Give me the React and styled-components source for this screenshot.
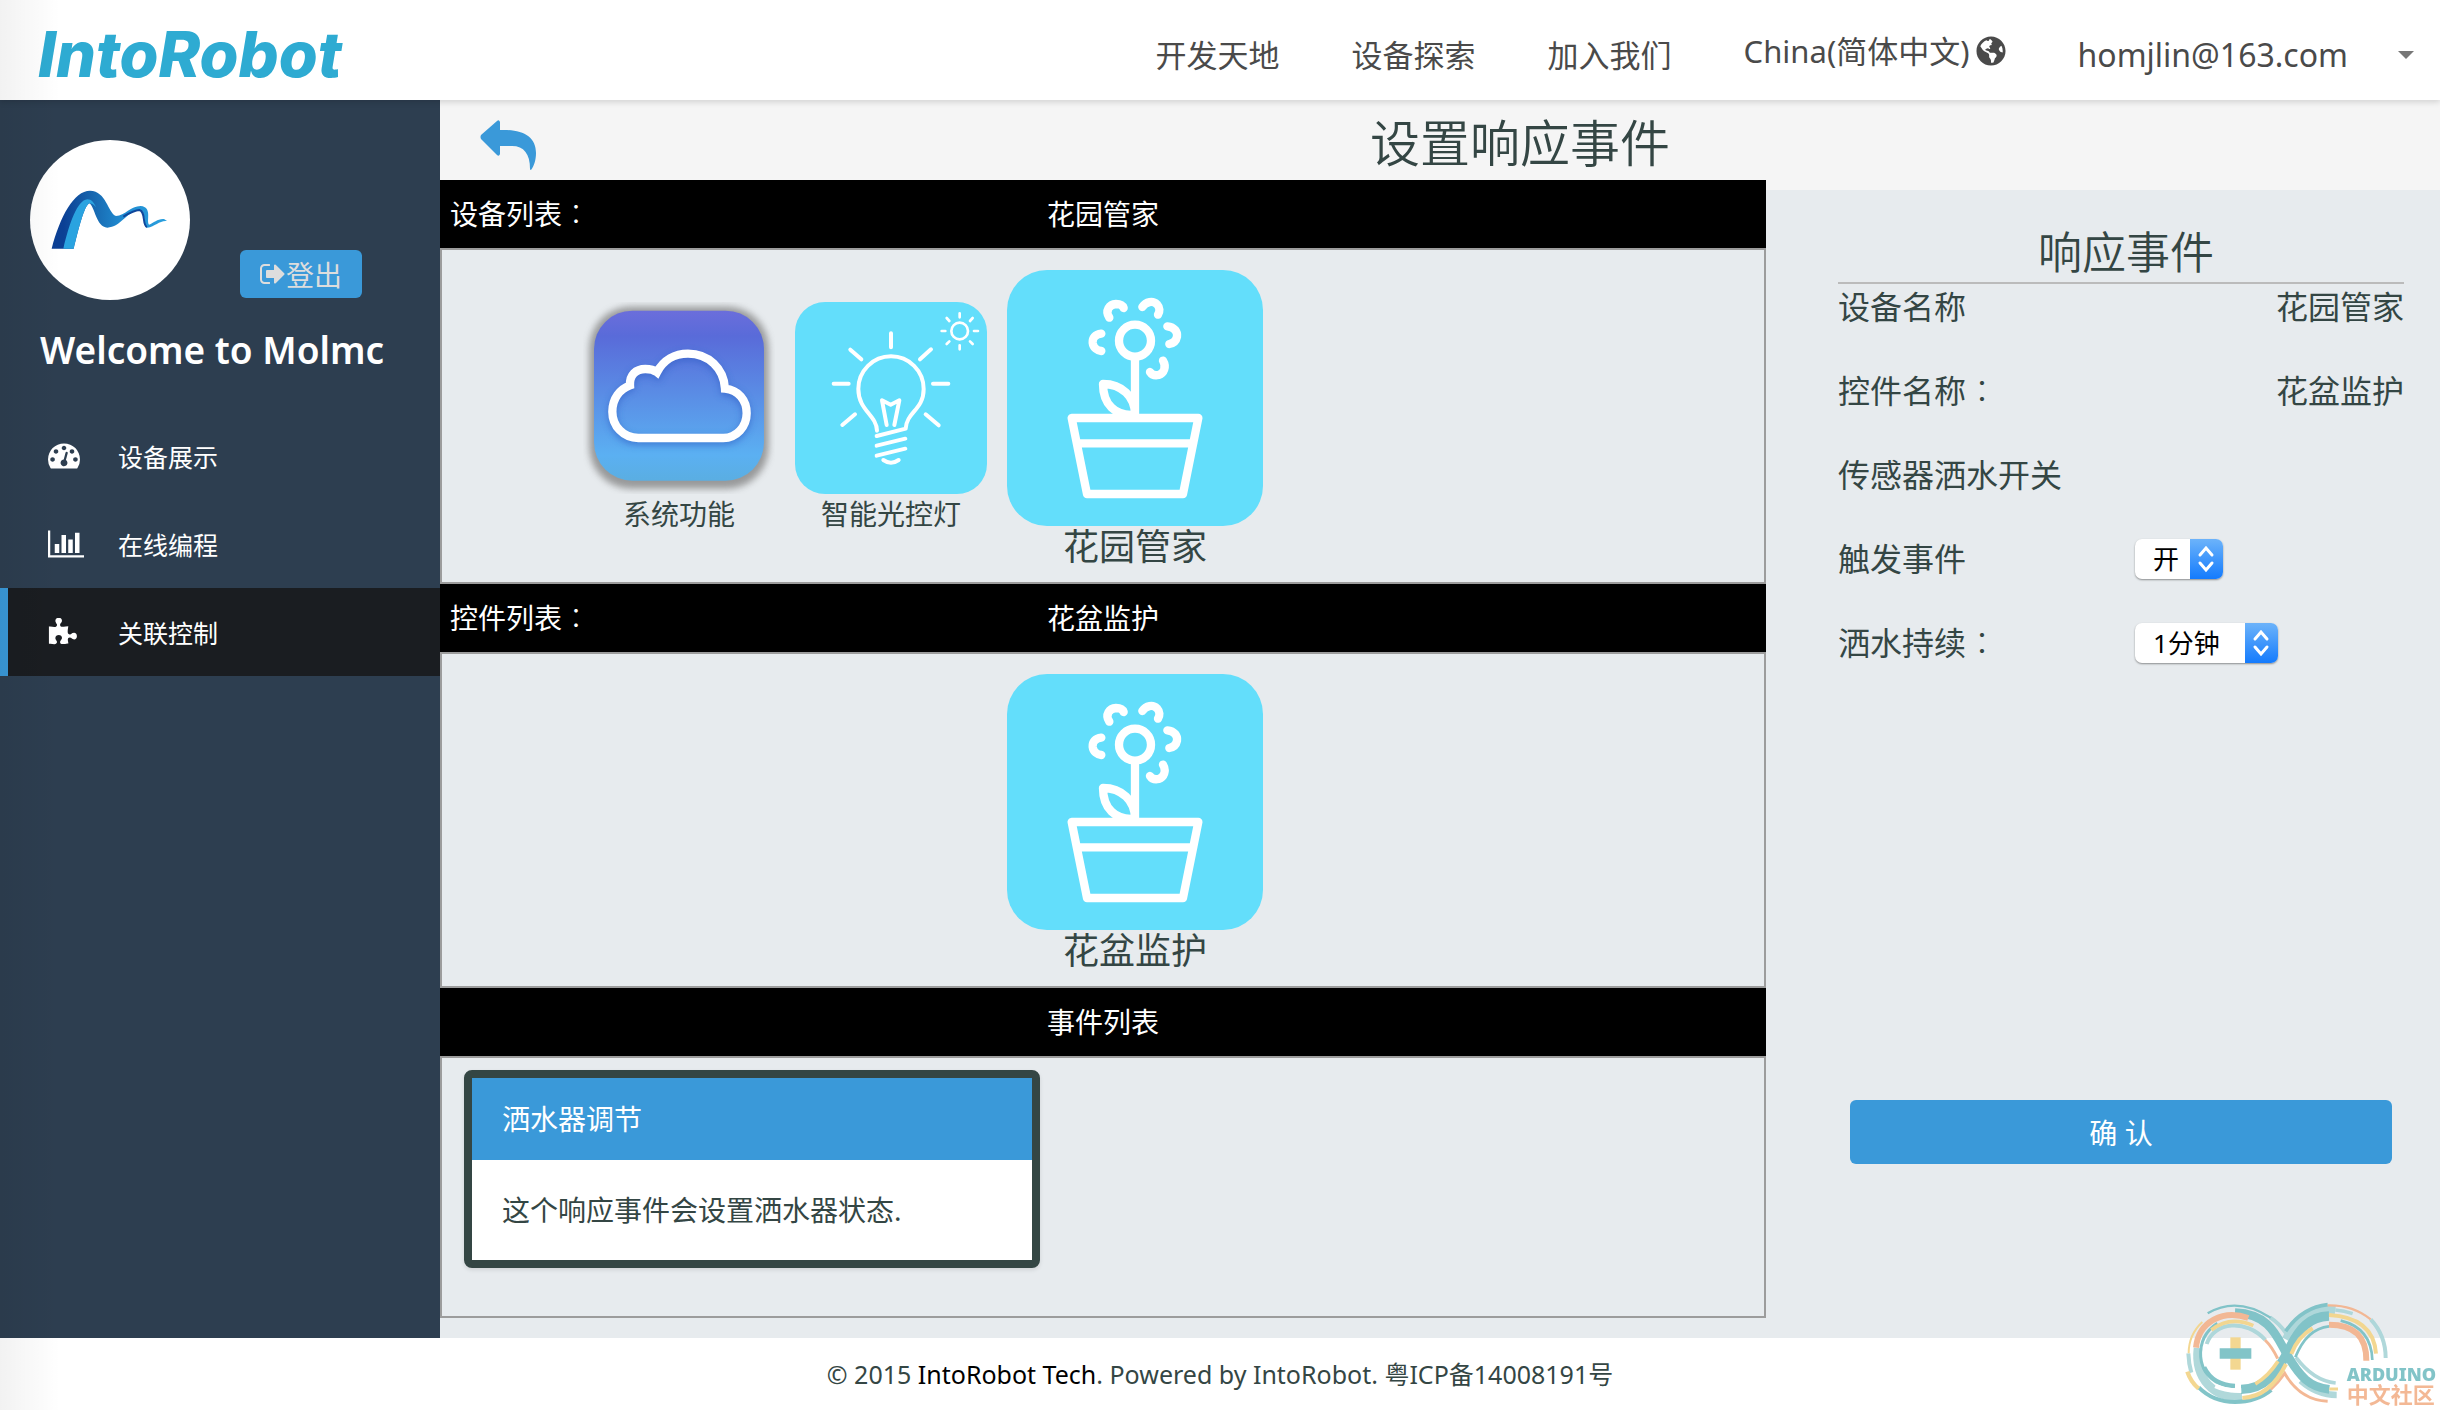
import React from "react";
import styled, { createGlobalStyle } from "styled-components";
import { FaGlobeAmericas } from "react-icons/fa";

const GlobalStyle = createGlobalStyle`
  * {
    box-sizing: border-box;
  }
  body {
    margin: 0;
    color: #344644;
    background-color: white;
    font-family: "Noto Sans", "Noto Sans CJK SC", sans-serif;
    font-size: 28px;
  }
  h1, h2, p, ul {
    margin: 0;
    padding: 0;
    font-weight: 400;
  }
  a {
    color: inherit;
    text-decoration: none;
  }
  button, select {
    font-family: inherit;
  }
`;

const Page = styled.div`
  position: relative;
  display: flex;
  flex-direction: column;
  min-height: 100vh;
`;

const EdgeShade = styled.div`
  position: absolute;
  top: 0;
  bottom: 0;
  left: 0;
  width: 60px;
  background: linear-gradient(to right, rgba(0, 0, 0, 0.05), transparent);
  pointer-events: none;
`;

const Header = styled.header`
  position: relative;
  display: flex;
  align-items: center;
  justify-content: space-between;
  height: 100px;
  padding: 0 26px 0 36px;
  background-color: white;
  box-shadow: 0 2px 6px rgba(0, 0, 0, 0.15);
`;

const Brand = styled.a`
  font-family: Inter, sans-serif;
  font-size: 63px;
  font-style: italic;
  font-weight: 800;
  line-height: 100px;
  color: #2eabd2;
  padding: 8px 0 0 2px;
`;

const Nav = styled.nav`
  display: flex;
  align-items: center;
  gap: 72px;
  padding-top: 10px;
  font-size: 31px;
  line-height: 44px;
  color: #4a4a4a;
`;

const Language = styled.a`
  display: flex;
  align-items: center;
  gap: 6px;
  padding-bottom: 8px;

  svg {
    width: 30px;
    height: 30px;
  }
`;

const Account = styled.button`
  display: flex;
  align-items: center;
  gap: 50px;
  padding: 0;
  border: none;
  background: none;
  color: inherit;
  font-size: 32px;
  line-height: 44px;

  &::after {
    content: "";
    border: 8px solid transparent;
    border-top-color: #777;
    border-bottom: none;
  }
`;

const Body = styled.div`
  display: flex;
  flex: 1;
`;

const Sidebar = styled.aside`
  flex: 0 0 440px;
  background-color: #2d3e50;
  color: white;
`;

const Profile = styled.div`
  display: flex;
  align-items: flex-end;
  gap: 50px;
  padding: 40px 30px 0;
`;

const Avatar = styled.svg`
  width: 160px;
  height: 160px;
  border-radius: 50%;
  background-color: white;
`;

const Logout = styled.button`
  display: flex;
  align-items: center;
  justify-content: center;
  width: 122px;
  height: 48px;
  margin-bottom: 2px;
  padding: 0;
  border: none;
  border-radius: 6px;
  background-color: #3a99d9;
  color: #ddd;
  font-size: 28px;

  svg {
    width: 26px;
    height: 28px;
  }
`;

const Welcome = styled.p`
  padding: 24px 40px 0;
  font-size: 37px;
  font-weight: 600;
  line-height: 52px;
`;

const Menu = styled.ul`
  padding-top: 36px;
  list-style: none;
`;

const MenuLink = styled.a`
  display: flex;
  align-items: center;
  height: 88px;
  padding-left: 40px;
  border-left: 8px solid ${props => (props.$active ? "#3a99d9" : "transparent")};
  background-color: ${props => (props.$active ? "#1a1d21" : "transparent")};
  font-size: 25px;
`;

const MenuIcon = styled.svg`
  width: ${props => props.$width}px;
  height: 28px;
  margin-right: ${props => 70 - props.$width}px;
`;

const Main = styled.main`
  flex: 1;
  min-width: 0;
  display: flex;
  flex-direction: column;
  background-color: #f5f5f5;
`;

const TitleBar = styled.div`
  display: grid;
  grid-template-columns: 160px 1fr;
  align-items: center;
  height: 80px;
`;

const Back = styled.button`
  justify-self: start;
  margin-left: 40px;
  padding: 10px 0 0;
  border: none;
  background: none;

  svg {
    display: block;
    width: 56px;
    height: 50px;
  }
`;

const Title = styled.h1`
  font-family: "Noto Sans CJK SC", sans-serif;
  font-size: 50px;
  font-weight: 350;
  line-height: 80px;
  text-align: center;
`;

const Columns = styled.div`
  flex: 1;
  display: grid;
  grid-template-columns: 66.3% 1fr;
`;

const Lists = styled.div`
  padding-bottom: 20px;
  background-color: #e7ebee;
`;

const ListBar = styled.div`
  display: grid;
  grid-template-columns: 1fr auto 1fr;
  height: 68px;
  padding: 0 10px;
  background-color: black;
  color: white;
  font-size: 28px;
  line-height: 68px;
`;

// full-width colon centred in its cell
const Colon = styled.span`
  font-family: "Noto Sans CJK TC", sans-serif;
  font-weight: 300;
  line-height: 1;
`;

const Tiles = styled.div`
  display: grid;
  grid-template-columns: 1fr 256px 1fr;
  padding: 20px 0 14px 64px;
  border: 2px solid #9c9c9c;
`;

const SideTiles = styled.div`
  display: flex;
  align-items: flex-start;
  justify-content: flex-end;
  gap: 20px;
  padding: 32px 20px 0 0;
`;

const TileButton = styled.button`
  display: block;
  width: ${props => (props.$big ? 256 : 192)}px;
  padding: 0;
  border: none;
  background: none;
  color: inherit;
  font-size: ${props => (props.$big ? 36 : 28)}px;
  line-height: ${props => (props.$big ? 42 : 40)}px;
  text-align: center;

  svg {
    display: block;
    width: 100%;
  }
`;

const Events = styled.div`
  padding: 12px 22px 48px;
  border: 2px solid #9c9c9c;
`;

const EventCard = styled.article`
  max-width: 576px;
  border: 8px solid #344644;
  border-radius: 8px;
  background-color: white;
  box-shadow: 0 2px 4px rgba(0, 0, 0, 0.1);
`;

const EventName = styled.h2`
  padding: 0 30px;
  background-color: #3a99d9;
  color: white;
  font-size: 28px;
  line-height: 82px;
`;

const EventText = styled.p`
  padding: 0 30px;
  line-height: 100px;
`;

const Panel = styled.form`
  display: flex;
  flex-direction: column;
  margin-top: 10px;
  padding: 28px 36px 0 72px;
  background-color: #e7ebee;
`;

const PanelTitle = styled.h2`
  padding-left: 10px;
  border-bottom: 2px solid #bbb;
  font-family: "Noto Sans CJK SC", sans-serif;
  font-size: 44px;
  font-weight: 350;
  line-height: 64px;
  text-align: center;
`;

const Field = styled.div`
  display: grid;
  grid-template-columns: 297px 1fr;
  align-items: center;
  height: 46px;
  margin-bottom: 38px;
  font-size: 32px;
  line-height: 46px;
`;

const FieldValue = styled.span`
  text-align: right;
`;

const SelectBox = styled.div`
  position: relative;
  justify-self: start;
  height: 40px;

  svg {
    position: absolute;
    top: 0;
    right: 0;
    width: 33px;
    height: 40px;
    border-radius: 0 7px 7px 0;
    background: linear-gradient(#6cb3fa, #147bfd);
    pointer-events: none;
  }
`;

const Select = styled.select`
  appearance: none;
  display: block;
  height: 40px;
  padding: 0 43px 0 18px;
  border: none;
  border-radius: 7px;
  background-color: white;
  box-shadow: 0 1px 2px rgba(0, 0, 0, 0.4);
  color: black;
  font-size: 26px;
`;

const Confirm = styled.button`
  height: 64px;
  margin: auto 12px 174px;
  border: none;
  border-radius: 6px;
  background-color: #3a99d9;
  color: white;
  font-size: 28px;
`;

const Footer = styled.footer`
  font-size: 25px;
  line-height: 72px;
  text-align: center;

  a {
    color: black;
  }
`;

const Watermark = styled.div`
  position: absolute;
  right: 0;
  bottom: 0;
  width: 300px;
  height: 130px;
  opacity: 0.95;
  pointer-events: none;

  svg {
    display: block;
    width: 300px;
    height: 130px;
  }
`;

const WatermarkText = styled.div`
  position: absolute;
  right: 4px;
  bottom: 5px;
  color: #f3b590;
  font-size: 22px;
  font-weight: 700;
  line-height: 22px;

  strong {
    display: block;
    color: #7cc1c6;
    font-size: 18px;
    line-height: 18px;
  }
`;

const menu = [
  {
    name: "设备展示",
    width: 32,
    viewBox: "0 256 1792 1408",
    path:
      "M384 1152q0-53-37.5-90.5t-90.5-37.5-90.5 37.5-37.5 90.5 37.5 90.5 90.5 37.5 90.5-37.5 37.5-90.5zm192-448q0-53-37.5-90.5t-90.5-37.5-90.5 37.5-37.5 90.5 37.5 90.5 90.5 37.5 90.5-37.5 37.5-90.5zm428 481l101-382q6-26-7.5-48.5t-38.5-29.5-48 6.5-30 39.5l-101 382q-60 5-107 43.5t-63 98.5q-20 77 20 146t117 89 146-20 89-117q16-60-6-117t-72-91zm660-33q0-53-37.5-90.5t-90.5-37.5-90.5 37.5-37.5 90.5 37.5 90.5 90.5 37.5 90.5-37.5 37.5-90.5zm-640-640q0-53-37.5-90.5t-90.5-37.5-90.5 37.5-37.5 90.5 37.5 90.5 90.5 37.5 90.5-37.5 37.5-90.5zm448 192q0-53-37.5-90.5t-90.5-37.5-90.5 37.5-37.5 90.5 37.5 90.5 90.5 37.5 90.5-37.5 37.5-90.5zm320 448q0 261-141 483-19 29-54 29h-1402q-35 0-54-29-141-221-141-483 0-182 71-348t191-286 286-191 348-71 348 71 286 191 191 286 71 348z"
  },
  {
    name: "在线编程",
    width: 36,
    viewBox: "0 128 2048 1536",
    path:
      "M640 896v512h-256v-512h256zm384-512v1024h-256v-1024h256zm1024 1152v128h-2048v-1536h128v1408h1920zm-640-896v768h-256v-768h256zm384-384v1152h-256v-1152h256z"
  },
  {
    name: "关联控制",
    active: true,
    width: 30,
    viewBox: "64 0 1728 1664",
    path:
      "M1755 1083q0 81-44.5 135t-123.5 54q-41 0-77.5-17.5t-59-38-56.5-38-71-17.5q-110 0-110 124 0 39 16 115t15 115v5q-22 0-33 1-34 3-97.5 11.5t-115.5 13.5-98 5q-61 0-103-26.5t-42-83.5q0-37 17.5-71t38-56.5 38-59 17.5-77.5q0-79-54-123.5t-135-44.5q-84 0-143 45.5t-59 127.5q0 43 15 83t33.5 64.5 33.5 53 15 50.5q0 45-46 89-37 35-117 35-95 0-245-24-9-2-27.5-4t-27.5-4l-13-2q-1 0-3-1-2 0-2-1v-1024q2 1 17.5 3.5t34 5 21.5 3.5q150 24 245 24 80 0 117-35 46-44 46-89 0-22-15-50.5t-33.5-53-33.5-64.5-15-83q0-82 59-127.5t144-45.5q80 0 134 44.5t54 123.5q0 41-17.5 77.5t-38 59-38 56.5-17.5 71q0 57 42 83.5t103 26.5q64 0 180-15t163-17v2q-1 2-3.5 17.5t-5 34-3.5 21.5q-24 150-24 245 0 80 35 117 44 46 89 46 22 0 50.5-15t53-33.5 64.5-33.5 83-15q82 0 127.5 59t45.5 143z"
  }
];

const MolmcLogo = () => (
  <Avatar viewBox="60 60 480 480">
    <defs>
      <linearGradient id="ribbon" x1="0" x2="1">
        <stop offset="0.1" stopColor="#0b3f94" />
        <stop offset="0.35" stopColor="#1766ae" />
        <stop offset="0.6" stopColor="#1f8ad0" />
        <stop offset="1" stopColor="#2aa0de" />
      </linearGradient>
    </defs>
    <path
      fill="url(#ribbon)"
      d="M125 386C150 290 192 212 240 212C290 214 292 276 318 288C345 287 362 258 392 258C428 261 408 303 417 314C432 308 444 295 462 297L471 303C450 300 436 319 412 323C394 320 414 271 386 271C350 275 332 322 292 323C258 322 255 260 238 250C222 258 205 330 191 386Z"
    />
    <path
      fill="#2aa3e0"
      d="M160 386C178 310 202 240 232 238C245 238 252 248 258 262C250 252 244 250 238 250C222 258 205 330 191 386Z"
    />
    <path
      fill="none"
      stroke="#0f469b"
      strokeWidth="6"
      d="M340 290C360 278 374 270 388 270C408 274 396 316 411 321"
    />
  </Avatar>
);

const CloudIcon = () => (
  <svg viewBox="69 126 576 576">
    <defs>
      <linearGradient id="sky" x2="0" y2="1">
        <stop offset="0" stopColor="#6b6edb" />
        <stop offset="0.15" stopColor="#596bd9" />
        <stop offset="0.85" stopColor="#5bb0f2" />
        <stop offset="1" stopColor="#5aaee2" />
      </linearGradient>
      <filter id="soft" x="-20%" y="-20%" width="140%" height="140%">
        <feGaussianBlur stdDeviation="11" />
      </filter>
    </defs>
    <rect x="88" y="140" width="538" height="546" rx="125" fill="#777" opacity="0.7" filter="url(#soft)" />
    <rect x="102" y="152" width="510" height="510" rx="115" fill="url(#sky)" />
    <g fill="none" strokeLinejoin="miter">
      <path
        stroke="#2f5fc4"
        strokeWidth="26"
        opacity="0.6"
        filter="url(#soft)"
        d="M235 542C190 542 157 506 157 463C157 423 180 393 210 381C208 353 228 335 256 335C272 335 284 338 292 345C310 308 345 289 384 289C445 289 492 333 495 394C535 398 560 428 560 468C560 508 530 542 490 542Z"
      />
      <path
        stroke="white"
        strokeWidth="25"
        d="M235 534C190 534 157 498 157 455C157 415 180 387 210 376C208 345 228 327 256 327C270 327 282 330 291 337C310 300 345 281 384 281C445 281 492 325 495 386C535 390 560 420 560 460C560 500 530 534 490 534Z"
      />
    </g>
  </svg>
);

const BulbIcon = () => (
  <svg viewBox="705 126 576 576">
    <rect x="705" y="126" width="576" height="576" rx="90" fill="#63defb" />
    <g fill="none" stroke="white" strokeWidth="12" strokeLinecap="round" strokeLinejoin="round">
      <path d="M951 512C950 465 895 452 895 387A98 98 0 0 1 1091 387C1091 450 1040 455 1037 506L950 528" />
      <path d="M980 495L966 421L992 434L1018 421L1003 495" />
      <path d="M950 557L1036 536M950 587L1036 566M970 600Q993 616 1016 600" />
      <path d="M993 220V262M871 269L904 298M1113 268L1080 298M821 371H866M1119 371H1165M847 495L885 463M1097 463L1136 496" />
      <g strokeWidth="8">
        <circle cx="1199" cy="213" r="25" />
        <path d="M1199 160V172M1199 256V268M1145 213H1156M1242 213H1254M1160 174L1168 183M1238 174L1230 183M1160 252L1168 244M1238 252L1230 244" />
      </g>
    </g>
  </svg>
);

const PotIcon = () => (
  <svg viewBox="81 60 768 768">
    <rect x="81" y="60" width="768" height="768" rx="120" fill="#63defb" />
    <g fill="none" stroke="white" strokeWidth="25" strokeLinecap="round" strokeLinejoin="round">
      <circle cx="465" cy="272" r="48" />
      <path d="M465 332V500M369 402C425 402 465 440 465 494C405 500 369 462 369 402Z" />
      <path d="M275 504H655L609 732H321ZM292 580H640" />
      <path d="M388 203C374 182 388 163 408 162C420 162 428 166 431 174" />
      <path d="M487 171C498 154 519 151 531 163C540 173 540 185 534 194" />
      <path d="M562 229C584 231 593 246 591 260C588 275 580 280 568 282" />
      <path d="M549 332C560 350 552 370 536 375C525 377 515 374 510 366" />
      <path d="M364 251C345 253 337 265 338 278C340 294 352 302 364 303" />
    </g>
  </svg>
);

const InfinityMark = () => (
  <svg viewBox="0 0 900 390" fill="none">
    <g stroke="#acd6d9">
      <path strokeWidth="12" d="M390 112Q418 130 440 162" />
      <path strokeWidth="12" d="M145 220Q146 250 154 278" />
      <path strokeWidth="26" d="M174 204Q166 272 204 314Q240 354 306 352" />
      <path strokeWidth="12" d="M200 192C222 125 318 115 376 180" />
      <path strokeWidth="24" d="M437 178C480 100 530 82 586 90" />
      <path strokeWidth="10" d="M586 90Q612 92 638 101" />
      <path strokeWidth="12" d="M692 118Q737 166 737 234" />
      <path strokeWidth="11" d="M468 232Q520 302 587 309" />
      <path strokeWidth="19" d="M482 302Q530 345 590 345" />
    </g>
    <g stroke="#7cc1c6">
      <path strokeWidth="7" d="M203 100Q290 48 392 113" />
      <path strokeWidth="9" d="M232 130Q178 166 182 230Q184 262 204 284" />
      <path strokeWidth="14" d="M192 262Q218 316 285 318" />
      <path strokeWidth="12" d="M176 322Q220 366 285 366Q350 366 394 330" />
      <path strokeWidth="28" d="M303 328C380 328 412 270 440 222C478 140 510 110 567 108" />
      <path strokeWidth="26" d="M285 98C390 102 410 170 440 222C480 292 510 322 568 328" />
      <path strokeWidth="11" d="M437 154Q486 82 563 74" />
      <path strokeWidth="8" d="M466 232Q500 146 567 139" />
      <path strokeWidth="8" d="M602 122Q694 144 697 240" />
    </g>
    <g stroke="#f3b590">
      <path strokeWidth="18" d="M168 203C176 124 250 88 325 114" />
      <path strokeWidth="9" d="M375 180Q396 200 413 236" />
      <path strokeWidth="9" d="M392 328Q416 306 434 280Q480 360 563 364" />
      <path strokeWidth="7" d="M563 76Q638 74 692 118" />
      <path strokeWidth="18" d="M567 134Q680 134 679 242" />
    </g>
    <g stroke="#f3d58c">
      <path strokeWidth="6" d="M146 220Q146 164 187 126" />
      <path strokeWidth="13" d="M142 275Q152 306 176 326" />
      <path strokeWidth="11" d="M214 150Q270 106 340 137" />
      <path strokeWidth="12" d="M307 354Q390 350 438 252" />
      <path strokeWidth="11" d="M346 312Q384 290 414 244" />
      <path strokeWidth="12" d="M454 222Q474 170 518 145" />
      <path strokeWidth="12" d="M567 105Q700 112 708 221" />
      <path strokeWidth="9" d="M568 327H594" />
    </g>
    <path stroke="white" strokeWidth="14" d="M226 318Q260 334 304 331" />
    <path fill="#f3d58c" d="M271 172H302V269H271Z" />
    <path fill="#7cc1c6" d="M239 205H334V236H239Z" />
  </svg>
);

const Tile = ({ icon, name, big }) => (
  <TileButton type="button" $big={big}>
    {icon}
    {name}
  </TileButton>
);

const Dropdown = ({ id, options }) => (
  <SelectBox>
    <Select id={id}>
      {options.map(option => (
        <option key={option}>{option}</option>
      ))}
    </Select>
    <svg viewBox="0 0 33 40" fill="none" stroke="white" strokeWidth="3">
      <path d="M10 16L16 9L22 16M10 24L16 31L22 24" strokeLinecap="round" />
    </svg>
  </SelectBox>
);

const App = () => (
  <Page>
    <GlobalStyle />
    <Header>
      <Brand href="#">IntoRobot</Brand>
      <Nav>
        <a href="#develop">开发天地</a>
        <a href="#explore">设备探索</a>
        <a href="#join">加入我们</a>
        <Language href="#language">
          China(简体中文)
          <FaGlobeAmericas />
        </Language>
        <Account type="button">homjlin@163.com</Account>
      </Nav>
    </Header>
    <Body>
      <Sidebar>
        <Profile>
          <MolmcLogo />
          <Logout type="button">
            <svg viewBox="64 0 1664 1792" fill="currentColor">
              <path d="M704 1440q0 4 1 20t.5 26.5-3 23.5-10 19.5-20.5 6.5h-320q-119 0-203.5-84.5t-84.5-203.5v-704q0-119 84.5-203.5t203.5-84.5h320q13 0 22.5 9.5t9.5 22.5q0 4 1 20t.5 26.5-3 23.5-10 19.5-20.5 6.5h-320q-66 0-113 47t-47 113v704q0 66 47 113t113 47h312l11.5 1 11.5 3 8 5.5 7 9 2 13.5zm928-544q0 26-19 45l-544 544q-19 19-45 19t-45-19-19-45v-288h-448q-26 0-45-19t-19-45v-384q0-26 19-45t45-19h448v-288q0-26 19-45t45-19 45 19l544 544q19 19 19 45z" />
            </svg>
            登出
          </Logout>
        </Profile>
        <Welcome>Welcome to Molmc</Welcome>
        <Menu>
          {menu.map(item => (
            <li key={item.name}>
              <MenuLink href="#" $active={item.active}>
                <MenuIcon viewBox={item.viewBox} $width={item.width} fill="white">
                  <path d={item.path} />
                </MenuIcon>
                {item.name}
              </MenuLink>
            </li>
          ))}
        </Menu>
      </Sidebar>
      <Main>
        <TitleBar>
          <Back type="button" aria-label="返回">
            <svg viewBox="0 0 56 50" fill="#3a99d9">
              <path d="M20 2V10C42 9 56 16 56 33C56 40 54 46 51 50Q50 50 50 49C50 34 44 26 32 26H20V34Q19 37 17 35L1 19Q0 17 1 15L17 1Q19-1 20 2Z" />
            </svg>
          </Back>
          <Title>设置响应事件</Title>
        </TitleBar>
        <Columns>
          <Lists>
            <ListBar>
              <span>
                设备列表<Colon>：</Colon>
              </span>
              <span>花园管家</span>
            </ListBar>
            <Tiles>
              <SideTiles>
                <Tile icon={<CloudIcon />} name="系统功能" />
                <Tile icon={<BulbIcon />} name="智能光控灯" />
              </SideTiles>
              <Tile big icon={<PotIcon />} name="花园管家" />
            </Tiles>
            <ListBar>
              <span>
                控件列表<Colon>：</Colon>
              </span>
              <span>花盆监护</span>
            </ListBar>
            <Tiles>
              <SideTiles />
              <Tile big icon={<PotIcon />} name="花盆监护" />
            </Tiles>
            <ListBar>
              <span />
              <span>事件列表</span>
            </ListBar>
            <Events>
              <EventCard>
                <EventName>洒水器调节</EventName>
                <EventText>这个响应事件会设置洒水器状态.</EventText>
              </EventCard>
            </Events>
          </Lists>
          <Panel onSubmit={e => e.preventDefault()}>
            <PanelTitle>响应事件</PanelTitle>
            <Field>
              <span>设备名称</span>
              <FieldValue>花园管家</FieldValue>
            </Field>
            <Field>
              <span>
                控件名称<Colon>：</Colon>
              </span>
              <FieldValue>花盆监护</FieldValue>
            </Field>
            <Field>
              <span>传感器洒水开关</span>
            </Field>
            <Field>
              <label htmlFor="trigger">触发事件</label>
              <Dropdown id="trigger" options={["开", "关"]} />
            </Field>
            <Field>
              <label htmlFor="duration">
                洒水持续<Colon>：</Colon>
              </label>
              <Dropdown id="duration" options={["1分钟", "5分钟", "10分钟"]} />
            </Field>
            <Confirm type="submit">确 认</Confirm>
          </Panel>
        </Columns>
      </Main>
    </Body>
    <Footer>
      © 2015 <a href="#">IntoRobot Tech</a>. Powered by IntoRobot. 粤ICP备14008191号
    </Footer>
    <EdgeShade />
    <Watermark>
      <InfinityMark />
      <WatermarkText>
        <strong>ARDUINO</strong>
        中文社区
      </WatermarkText>
    </Watermark>
  </Page>
);

export default App;
